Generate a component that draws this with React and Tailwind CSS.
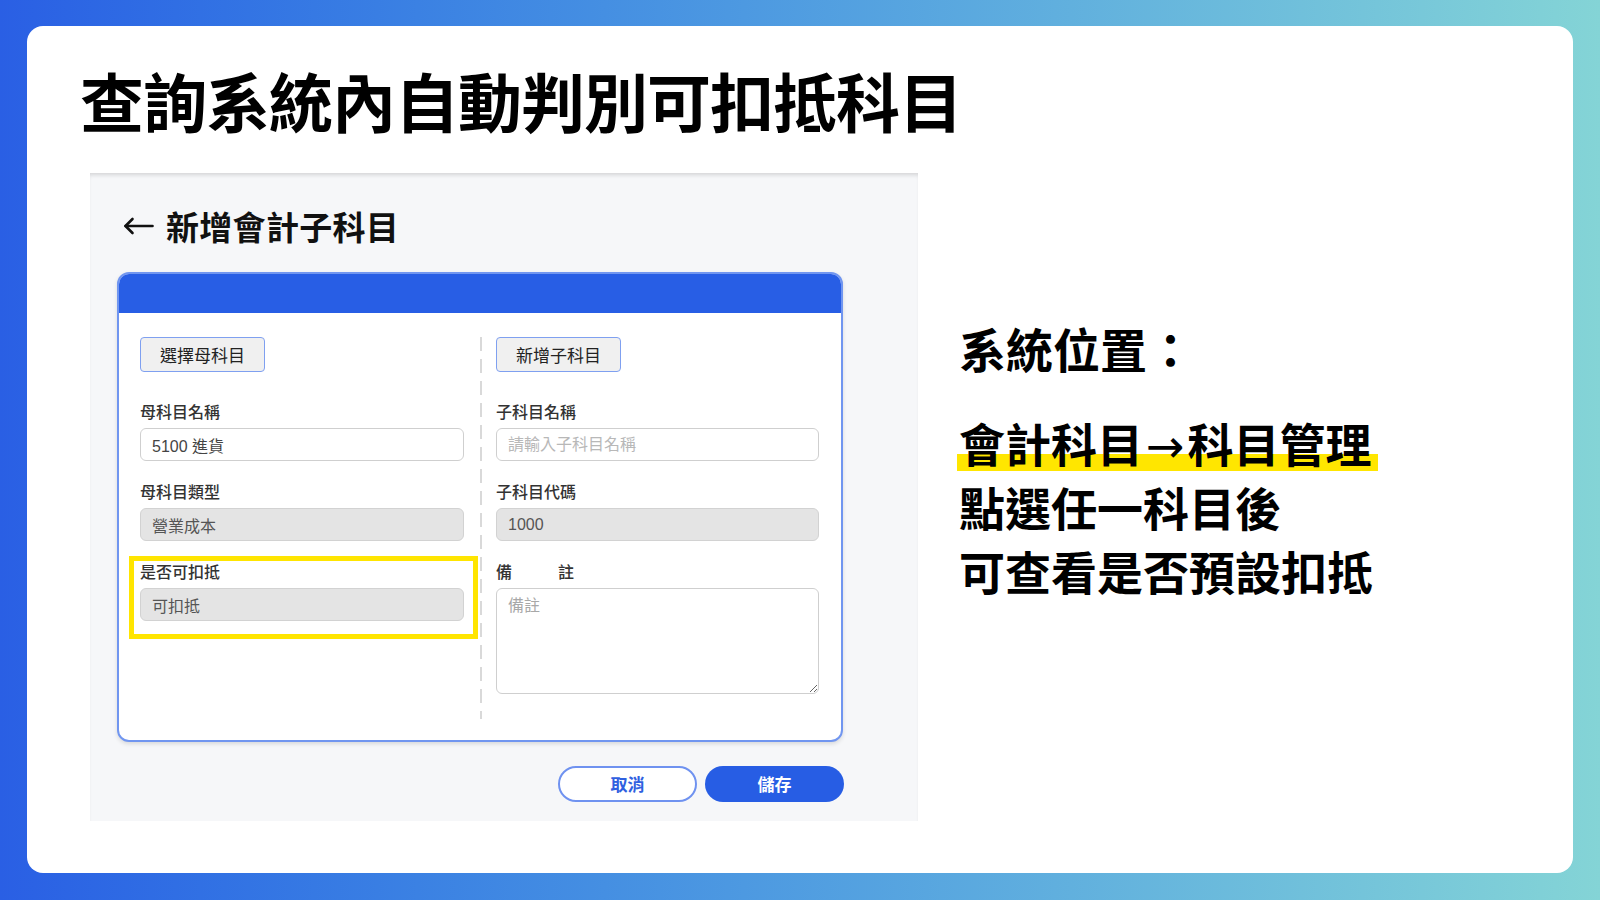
import React from 'react'

const cjk = "font-['Noto_Sans_CJK_TC','Noto_Sans_CJK_SC',sans-serif]"
const form = "font-['Liberation_Sans','Noto_Sans_CJK_TC',sans-serif]"

function Label({ children }) {
  return (
    <div className={`h-[20px] leading-[20px] text-[16px] font-medium text-[#333] mb-[7px] ${cjk}`}>
      {children}
    </div>
  )
}

function TextBox({ value, placeholder, gray }) {
  return (
    <input
      readOnly
      defaultValue={value}
      placeholder={placeholder}
      className={`block h-[33px] w-full rounded-[6px] border px-[11px] text-[16px] outline-none placeholder:text-[#b8b8b8] ${form} ${
        gray ? 'bg-[#e4e4e4] border-[#d2d2d2] text-[#555]' : 'bg-white border-[#cfcfcf] text-[#444]'
      }`}
    />
  )
}

function TabButton({ children }) {
  return (
    <button className={`h-[35px] w-[125px] rounded-[4px] border-[1.5px] border-[#7fa0f0] bg-[#f0f0f0] text-[17px] text-[#222] ${cjk}`}>
      {children}
    </button>
  )
}

function FormCard() {
  return (
    <div className="w-[726px] h-[470px] rounded-[12px] border-2 border-[#7196f0] bg-white overflow-hidden shadow-[0_2px_4px_rgba(0,0,0,0.12)] flex flex-col">
      <div className="h-[39px] bg-[#285ee5] shrink-0" />
      <div className="flex flex-1 pl-[21px] pr-[22px] pt-[24px] pb-[21px]">
        {/* left column */}
        <div className="w-[324px] flex flex-col">
          <TabButton>選擇母科目</TabButton>
          <div className="mt-[29px]">
            <Label>母科目名稱</Label>
            <TextBox value="5100 進貨" />
          </div>
          <div className="mt-[20px]">
            <Label>母科目類型</Label>
            <TextBox value="營業成本" gray />
          </div>
          <div className="mt-[20px] relative">
            <Label>是否可扣抵</Label>
            <TextBox value="可扣抵" gray />
            <div className="absolute -left-[11px] -right-[14px] -top-[5px] -bottom-[18px] border-[5px] border-[#ffe500] pointer-events-none" />
          </div>
        </div>

        {/* divider */}
        <div className="ml-[16px] mr-[14px] w-[2px] bg-[repeating-linear-gradient(to_bottom,#d9d9d9_0_14px,transparent_14px_22px)]" />

        {/* right column */}
        <div className="flex-1 flex flex-col">
          <TabButton>新增子科目</TabButton>
          <div className="mt-[29px]">
            <Label>子科目名稱</Label>
            <TextBox placeholder="請輸入子科目名稱" />
          </div>
          <div className="mt-[20px]">
            <Label>子科目代碼</Label>
            <TextBox value="1000" gray />
          </div>
          <div className="mt-[20px]">
            <Label>
              <span>備</span>
              <span className="ml-[46px]">註</span>
            </Label>
            <textarea
              readOnly
              placeholder="備註"
              className={`block h-[106px] w-full rounded-[6px] border border-[#cfcfcf] bg-white px-[11px] pt-[5px] text-[16px] leading-[20px] outline-none placeholder:text-[#a8a8a8] ${cjk}`}
            />
          </div>
        </div>
      </div>
    </div>
  )
}

function Screenshot() {
  return (
    <div className="w-[828px] h-[648px] shrink-0 bg-[#f6f7f9] shadow-[inset_0_4px_4px_-2px_rgba(0,0,0,0.14)] pl-[27px] pt-[37px]">
      <div className="ml-[6px] flex items-center h-[32px]">
        <svg width="31" height="18" viewBox="0 0 31 18" fill="none" stroke="#111" strokeWidth="2.6" strokeLinecap="round" strokeLinejoin="round">
          <path d="M29.5 9H2.5" />
          <path d="M9.5 2L2.5 9L9.5 16" />
        </svg>
        <span className={`ml-[12px] text-[33px] leading-[32px] font-bold text-[#111] tracking-[0.3px] ${cjk}`}>新增會計子科目</span>
      </div>
      <div className="mt-[30px]">
        <FormCard />
      </div>
      <div className="w-[727px] mt-[24px] flex justify-end gap-[8px]">
        <button className={`h-[36px] w-[139px] rounded-full border-2 border-[#6f92f0] bg-white text-[17px] font-bold text-[#3060e0] ${cjk}`}>
          取消
        </button>
        <button className={`h-[36px] w-[139px] rounded-full bg-[#275de4] text-[17px] font-bold text-white ${cjk}`}>
          儲存
        </button>
      </div>
    </div>
  )
}

export default function App() {
  return (
    <div className="w-[1600px] h-[900px] bg-gradient-to-r from-[#2a5fe4] to-[#84d4d6] pt-[26px] px-[27px] pb-[27px]">
      <div className={`h-full w-full rounded-[16px] bg-white pl-[53px] pt-[41px] ${cjk}`}>
        <h1 className="text-[64px] leading-[64px] font-bold text-black tracking-[-1px]">查詢系統內自動判別可扣抵科目</h1>
        <div className="mt-[42px] ml-[10px] flex">
          <Screenshot />
          <div className="ml-[41px] pt-[151px] text-black font-bold">
            <div className="text-[47px] leading-[48px]">系統位置：</div>
            <div className="mt-[38px] text-[46px] leading-[64px]">
              <div className="h-[64px] overflow-visible">
                <span className="relative inline-block h-[64px]">
                  <span className="absolute left-[-2px] right-[-6px] top-[44px] h-[17px] bg-[#ffe600]" />
                  <span className="relative">
                    會計科目<span className="font-['DejaVu_Sans',sans-serif] font-normal leading-[64px] mx-[3px]">→</span>科目管理
                  </span>
                </span>
              </div>
              <div className="h-[64px]">點選任一科目後</div>
              <div className="h-[64px]">可查看是否預設扣抵</div>
            </div>
          </div>
        </div>
      </div>
    </div>
  )
}
